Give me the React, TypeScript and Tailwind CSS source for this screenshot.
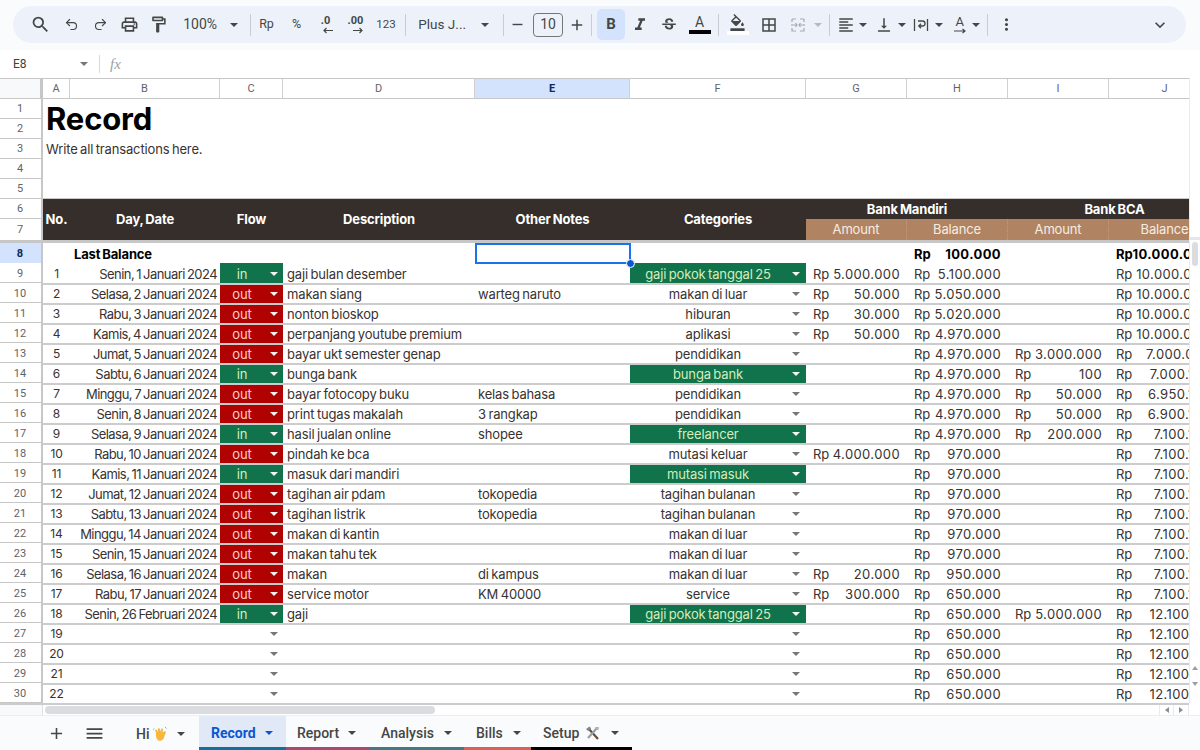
import React from "react";
import { Undo2, Redo2 } from "lucide-react";
import {
  MdSearch, MdOutlinePrint, MdOutlineFormatPaint, MdFormatItalic, MdStrikethroughS,
  MdFormatColorFill, MdOutlineBorderAll, MdVerticalAlignBottom, MdMoreVert, MdExpandMore, MdAdd, MdRemove, MdMenu, MdFormatAlignLeft,
} from "react-icons/md";

type Row = { d: string; f?: "in" | "out"; t?: string; n?: string; c?: string; g?: string; h: string; i?: string; j: string };

const rows: Row[] = [
  { d: "Senin, 1 Januari 2024", f: "in", t: "gaji bulan desember", c: "gaji pokok tanggal 25", g: "5.000.000", h: "5.100.000", j: "10.000.000" },
  { d: "Selasa, 2 Januari 2024", f: "out", t: "makan siang", n: "warteg naruto", c: "makan di luar", g: "50.000", h: "5.050.000", j: "10.000.000" },
  { d: "Rabu, 3 Januari 2024", f: "out", t: "nonton bioskop", c: "hiburan", g: "30.000", h: "5.020.000", j: "10.000.000" },
  { d: "Kamis, 4 Januari 2024", f: "out", t: "perpanjang youtube premium", c: "aplikasi", g: "50.000", h: "4.970.000", j: "10.000.000" },
  { d: "Jumat, 5 Januari 2024", f: "out", t: "bayar ukt semester genap", c: "pendidikan", h: "4.970.000", i: "3.000.000", j: "7.000.000" },
  { d: "Sabtu, 6 Januari 2024", f: "in", t: "bunga bank", c: "bunga bank", h: "4.970.000", i: "100", j: "7.000.100" },
  { d: "Minggu, 7 Januari 2024", f: "out", t: "bayar fotocopy buku", n: "kelas bahasa", c: "pendidikan", h: "4.970.000", i: "50.000", j: "6.950.100" },
  { d: "Senin, 8 Januari 2024", f: "out", t: "print tugas makalah", n: "3 rangkap", c: "pendidikan", h: "4.970.000", i: "50.000", j: "6.900.100" },
  { d: "Selasa, 9 Januari 2024", f: "in", t: "hasil jualan online", n: "shopee", c: "freelancer", h: "4.970.000", i: "200.000", j: "7.100.100" },
  { d: "Rabu, 10 Januari 2024", f: "out", t: "pindah ke bca", c: "mutasi keluar", g: "4.000.000", h: "970.000", j: "7.100.100" },
  { d: "Kamis, 11 Januari 2024", f: "in", t: "masuk dari mandiri", c: "mutasi masuk", h: "970.000", j: "7.100.100" },
  { d: "Jumat, 12 Januari 2024", f: "out", t: "tagihan air pdam", n: "tokopedia", c: "tagihan bulanan", h: "970.000", j: "7.100.100" },
  { d: "Sabtu, 13 Januari 2024", f: "out", t: "tagihan listrik", n: "tokopedia", c: "tagihan bulanan", h: "970.000", j: "7.100.100" },
  { d: "Minggu, 14 Januari 2024", f: "out", t: "makan di kantin", c: "makan di luar", h: "970.000", j: "7.100.100" },
  { d: "Senin, 15 Januari 2024", f: "out", t: "makan tahu tek", c: "makan di luar", h: "970.000", j: "7.100.100" },
  { d: "Selasa, 16 Januari 2024", f: "out", t: "makan", n: "di kampus", c: "makan di luar", g: "20.000", h: "950.000", j: "7.100.100" },
  { d: "Rabu, 17 Januari 2024", f: "out", t: "service motor", n: "KM 40000", c: "service", g: "300.000", h: "650.000", j: "7.100.100" },
  { d: "Senin, 26 Februari 2024", f: "in", t: "gaji", c: "gaji pokok tanggal 25", h: "650.000", i: "5.000.000", j: "12.100.100" },
  { d: "", h: "650.000", j: "12.100.100" },
  { d: "", h: "650.000", j: "12.100.100" },
  { d: "", h: "650.000", j: "12.100.100" },
  { d: "", h: "650.000", j: "12.100.100" },
];

const greenCats = ["gaji pokok tanggal 25", "bunga bank", "freelancer", "mutasi masuk"];
const COLS = "grid grid-cols-[27px_150px_63px_192px_155px_176px_101px_101px_101px_112px] w-[1178px]";
const SANS = "font-['Inter','Liberation_Sans',sans-serif] [word-spacing:-1px] tracking-[-0.15px]";
const UI = "font-['Roboto','Liberation_Sans',sans-serif] [word-spacing:0px] tracking-normal";

function Caret({ light }: { light?: boolean }) {
  return <span className={`w-0 h-0 border-x-[4px] border-t-[4px] border-x-transparent ${light ? "border-t-[#f3f3f3]" : "border-t-[#777777]"}`} />;
}
function TbCaret({ gray }: { gray?: boolean }) {
  return <span className={`block w-0 h-0 border-x-[4px] border-t-[4px] border-x-transparent ${gray ? "border-t-[#b5bac0]" : "border-t-[#444746]"}`} />;
}
function Slot({ className, children }: { className: string; children: React.ReactNode }) {
  return <div className={`flex items-center justify-center shrink-0 text-[#444746] ${className}`}>{children}</div>;
}
function Div() {
  return <div className="w-px h-[22px] bg-[#c7ccd4] shrink-0" />;
}
function Money({ v, bold, pad }: { v?: string; bold?: boolean; pad?: string }) {
  if (!v) return <div />;
  return (
    <div className={`flex justify-between items-center pl-[7px] whitespace-nowrap ${pad ?? "pr-[7px]"} ${bold ? "font-bold text-black" : ""}`}>
      <span>Rp</span>
      <span className="tracking-[0.4px]">{v}</span>
    </div>
  );
}
function jPad(v: string) {
  if (v.startsWith("10.")) return "pr-[12px]";
  if (v.startsWith("12.")) return "pr-[6px]";
  return "pr-[10px]";
}
function RowHead({ n, active, tall, noLine, shift }: { n: number; active?: boolean; tall?: boolean; noLine?: boolean; shift?: boolean }) {
  return (
    <div className={`w-[43px] shrink-0 flex items-center justify-center border-r-2 border-[#c7c7c7] text-[11px] pr-[1px] ${UI} ${tall ? "h-[21px]" : "h-5"} ${shift ? "pt-[2px]" : "pt-[1px]"} ${noLine ? "" : "border-b border-b-[#c7c7c7]"} ${active ? "bg-[#d3e3fd] text-[#0b2a5b] font-bold" : "bg-white text-[#5f6368]"}`}>
      {n}
    </div>
  );
}
function Hand() {
  return (
    <svg width="15" height="16" viewBox="0 0 15 16" className="ml-[3px]">
      <path d="M3 7 L2 4 L3.5 3.5 L5 6 L5 2.5 L6.6 2.2 L7.4 5.5 L8.4 2.4 L10 2.8 L9.6 6.5 L11.8 5 L13 6 L11.5 10 C11 14 8 15.5 5.5 14.5 C3.5 13.5 2.5 10 3 7Z" fill="#f6b73c" />
      <path d="M1 2.5 L0 4 M12 1 L13.5 2.5" stroke="#7fb2e6" strokeWidth="1" />
    </svg>
  );
}
function Tools() {
  return (
    <svg width="15" height="15" viewBox="0 0 15 15" className="ml-[6px]">
      <path d="M3 2 L13 13" stroke="#6b4a36" strokeWidth="2.2" />
      <path d="M12 2 L3 12" stroke="#9aa0a6" strokeWidth="2.2" />
      <path d="M1 3 L5 0.5 L6 3 L3 5Z" fill="#80868b" />
      <path d="M10 1 L14 1 L13.5 4 L11.5 4Z" fill="#b0b4b8" />
    </svg>
  );
}

export default function App() {
  return (
    <div className={`w-[1200px] h-[750px] overflow-hidden flex flex-col bg-white ${SANS}`}>
      {/* toolbar */}
      <div className="h-[50px] bg-[#f9fbfd] pt-[6px] pl-[13px] shrink-0">
        <div className={`w-[1173px] h-[37px] rounded-full bg-[#edf2fa] flex items-center pl-[11px] ${UI} text-[13px] text-[#444746]`}>
          <Slot className="w-[33px]"><MdSearch size={21} /></Slot>
          <Slot className="w-[29px]"><Undo2 size={15} strokeWidth={1.8} /></Slot>
          <Slot className="w-[29px]"><Redo2 size={15} strokeWidth={1.8} /></Slot>
          <Slot className="w-[29px]"><MdOutlinePrint size={19} /></Slot>
          <Slot className="w-[29px]"><MdOutlineFormatPaint size={19} /></Slot>
          <Slot className="w-[44px] text-[14px] justify-end">100%</Slot>
          <Slot className="w-[33px] justify-end pr-[12px]"><TbCaret /></Slot>
          <Div />
          <Slot className="w-[31px] text-[12.5px]">Rp</Slot>
          <Slot className="w-[29px] text-[12.5px]">%</Slot>
          <Slot className="w-[29px] flex-col leading-none">
            <span className="text-[11px] font-bold h-[11px] leading-[11px]">.0</span>
            <svg width="12" height="7" viewBox="0 0 12 7" className="mt-[1px] ml-[5px]"><path d="M11 3.5H2M4.5 1 2 3.5 4.5 6" fill="none" stroke="#444746" strokeWidth="1.2" /></svg>
          </Slot>
          <Slot className="w-[31px] flex-col leading-none">
            <span className="text-[11px] font-bold h-[11px] leading-[11px]">.00</span>
            <svg width="12" height="7" viewBox="0 0 12 7" className="mt-[1px] ml-[5px]"><path d="M1 3.5H10M7.5 1 10 3.5 7.5 6" fill="none" stroke="#444746" strokeWidth="1.2" /></svg>
          </Slot>
          <Slot className="w-[30px] text-[11.5px]">123</Slot>
          <div className="w-[4px] shrink-0" />
          <Div />
          <Slot className="w-[60px] text-[13.5px] justify-end">Plus J...</Slot>
          <Slot className="w-[37px]"><TbCaret /></Slot>
          <Div />
          <Slot className="w-[27px]"><MdRemove size={17} /></Slot>
          <Slot className="w-[30px] h-[24px] ml-[2px] border border-[#747775] rounded-[4px] text-[14px]">10</Slot>
          <Slot className="w-[28px]"><MdAdd size={18} /></Slot>
          <Div />
          <Slot className="w-[28px] h-[31px] ml-[5px] rounded-[5px] bg-[#d3e3fd] text-[15px] font-bold text-[#0b2a5b]">B</Slot>
          <Slot className="w-[29px]"><MdFormatItalic size={20} /></Slot>
          <Slot className="w-[30px]"><MdStrikethroughS size={18} /></Slot>
          <Slot className="w-[31px] flex-col">
            <span className="text-[14px] leading-[15px] h-[14px]">A</span>
            <span className="w-[22px] h-[4px] bg-black mt-[1px]" />
          </Slot>
          <div className="w-[3px] shrink-0" />
          <Div />
          <Slot className="w-[37px] flex-col">
            <MdFormatColorFill size={17} />
            <span className="w-[22px] h-[4px] bg-white" />
          </Slot>
          <Slot className="w-[26px]"><MdOutlineBorderAll size={18} /></Slot>
          <Slot className="w-[32px]">
            <svg width="14" height="14" viewBox="0 0 14 14" fill="none" stroke="#a5a9ae" strokeWidth="1.2">
              <path d="M1 1h4M1 1v3M1 6v2M1 10v3h4M13 1H9M13 1v3M13 6v2M13 10v3H9M2 7h4M4.5 5 6 7 4.5 9M12 7H8M9.5 5 8 7 9.5 9" />
            </svg>
          </Slot>
          <Slot className="w-[8px]"><TbCaret gray /></Slot>
          <div className="w-[7px] shrink-0" />
          <Div />
          <Slot className="w-[25px] justify-end"><MdFormatAlignLeft size={18} /></Slot>
          <Slot className="w-[12px] justify-end"><TbCaret /></Slot>
          <Slot className="w-[26px] justify-end"><MdVerticalAlignBottom size={18} /></Slot>
          <Slot className="w-[13px] justify-end"><TbCaret /></Slot>
          <Slot className="w-[23px] justify-end">
            <svg width="16" height="14" viewBox="0 0 16 14" fill="none" stroke="#444746" strokeWidth="1.3"><path d="M1.5 1v12M14.5 1v12M5 3h4.5a2 2 0 0 1 0 5H6M8 5.8 5.8 8 8 10.2" /></svg>
          </Slot>
          <Slot className="w-[14px] justify-end"><TbCaret /></Slot>
          <Slot className="w-[24px] flex-col items-end">
            <span className="text-[13px] leading-[13px] pr-[3px]">A</span>
            <svg width="14" height="6" viewBox="0 0 14 6"><path d="M1 3h11M9.5 1 12 3 9.5 5" fill="none" stroke="#444746" strokeWidth="1.2" /></svg>
          </Slot>
          <Slot className="w-[13px] justify-end"><TbCaret /></Slot>
          <div className="w-[7px] shrink-0" />
          <Div />
          <Slot className="w-[36px]"><MdMoreVert size={19} /></Slot>
          <div className="flex-1" />
          <Slot className="w-[24px] mr-[14px]"><MdExpandMore size={20} /></Slot>
        </div>
      </div>

      {/* formula bar */}
      <div className={`h-[28px] shrink-0 flex items-center bg-white text-[12px] text-[#3c4043] ${UI}`}>
        <span className="w-[80px] pl-[13px]">E8</span>
        <Caret />
        <span className="w-px h-[18px] bg-[#d5d8dc] ml-[11px]" />
        <span className="ml-[10px] text-[15px] italic text-[#9aa0a6] font-['Liberation_Serif',serif]">fx</span>
      </div>

      {/* sheet + scrollbar */}
      <div className="flex-1 min-h-0 flex">
        <div className="w-[1189px] shrink-0 flex flex-col overflow-hidden">
          {/* column header */}
          <div className={`h-[21px] shrink-0 flex border-y border-[#c7c7c7] text-[11px] text-[#5f6368] ${UI}`}>
            <div className="w-[43px] shrink-0 bg-[#f8f9fa] border-r-[3px] border-[#c7c7c7]" />
            <div className={`${COLS} text-center leading-[19px]`}>
              {["A", "B", "C", "D", "E", "F", "G", "H", "I", "J"].map((l) => (
                <div key={l} className={`border-r border-[#d0d0d0] ${l === "E" ? "bg-[#d3e3fd] text-[#0b2a5b] font-bold" : ""}`}>{l}</div>
              ))}
            </div>
          </div>

          {/* rows 1-5 */}
          <div className="flex h-[100px] shrink-0">
            <div className="flex flex-col">
              {[1, 2, 3, 4, 5].map((n) => <RowHead key={n} n={n} />)}
            </div>
            <div className="flex-1 border-b border-[#c7c7c7] pl-[3px]">
              <div className="text-[31px] font-bold text-black leading-[40px] h-[40px]">Record</div>
              <div className="text-[13px] text-[#383230] leading-[20px]">Write all transactions here.</div>
            </div>
          </div>

          {/* rows 6-7 */}
          <div className="flex h-[41px] shrink-0">
            <div className="flex flex-col">
              <RowHead n={6} />
              <RowHead n={7} tall noLine />
            </div>
            <div className={`${COLS} grid-rows-[20px_21px] bg-[#352e2b] text-white text-[13px] font-bold`}>
              <div className="row-span-2 flex items-center justify-center pt-[1px]">No.</div>
              <div className="row-span-2 flex items-center justify-center pt-[1px]">Day, Date</div>
              <div className="row-span-2 flex items-center justify-center pt-[1px]">Flow</div>
              <div className="row-span-2 flex items-center justify-center pt-[1px]">Description</div>
              <div className="row-span-2 flex items-center justify-center pt-[1px]">Other Notes</div>
              <div className="row-span-2 flex items-center justify-center pt-[1px]">Categories</div>
              <div className="col-span-2 flex items-center justify-center pt-[2px]">Bank Mandiri</div>
              <div className="col-span-2 flex items-center justify-center pt-[2px]">Bank BCA</div>
              {["Amount", "Balance", "Amount", "Balance"].map((l, i) => (
                <div key={i} className="bg-[#b08462] border-r border-dotted border-[#9aa5ad] font-normal text-[#f5ede4] flex items-center justify-center pt-[1px]">{l}</div>
              ))}
            </div>
          </div>
          <div className="h-[3px] shrink-0 bg-[#c7c7c7]" />

          {/* row 8 */}
          <div className="flex h-5 shrink-0 text-[13px] text-[#383230] leading-[20px]">
            <RowHead n={8} active noLine />
            <div className={COLS}>
              <div />
              <div className="pl-[4px] pt-[1px] font-bold text-black whitespace-nowrap">Last Balance</div>
              <div />
              <div />
              <div className="relative border-2 border-[#1a73e8] mr-[-1px]">
                <span className="absolute right-[-6px] bottom-[-6px] w-[9px] h-[9px] rounded-full bg-[#0b57d0] border border-white" />
              </div>
              <div />
              <div />
              <Money v="100.000" bold />
              <div />
              <Money v="10.000.000" bold pad="pr-[14px]" />
            </div>
          </div>

          {/* rows 9-30 */}
          {rows.map((r, i) => {
            const green = r.c && greenCats.includes(r.c);
            const first = i === 0;
            const fillTop = first ? "-mt-[2px] pt-[2px]" : "";
            return (
              <div key={i} className="flex h-5 shrink-0 text-[13px] text-[#383230] leading-[18px]">
                <RowHead n={i + 9} shift />
                <div className={`${COLS} ${first ? "pt-[2px]" : "border-t-2 border-[#cccccc]"}`}>
                  <div className="text-center text-[12px]">{i + 1}</div>
                  <div className="text-right pr-[3px] whitespace-nowrap tracking-[-0.55px]">{r.d}</div>
                  {r.f ? (
                    <div className={`flex items-center ${fillTop} ${r.f === "in" ? "bg-[#11734b] text-[#d4edbc]" : "bg-[#b10202] text-[#ffcfc9]"}`}>
                      <span className="flex-1 text-center">{r.f}</span>
                      <span className="w-[19px] flex justify-center"><Caret light /></span>
                    </div>
                  ) : (
                    <div className="flex items-center justify-end">
                      <span className="w-[19px] flex justify-center"><Caret /></span>
                    </div>
                  )}
                  <div className="pl-[4px] whitespace-nowrap">{r.t}</div>
                  <div className="pl-[3px] whitespace-nowrap">{r.n}</div>
                  <div className={`flex items-center ${green ? `bg-[#11734b] text-[#d4edbc] ${fillTop}` : ""}`}>
                    <span className="flex-1 text-center whitespace-nowrap">{r.c}</span>
                    <span className="w-[20px] flex justify-center"><Caret light={!!green} /></span>
                  </div>
                  <Money v={r.g} />
                  <Money v={r.h} />
                  <Money v={r.i} />
                  <Money v={r.j} pad={jPad(r.j)} />
                </div>
              </div>
            );
          })}

          {/* horizontal scrollbar */}
          <div className="h-[12px] shrink-0 flex border-t-2 border-[#cccccc]">
            <div className="w-[43px] shrink-0 bg-[#f8f9fa] border-r border-[#e0e0e0]" />
            <div className="flex-1 relative flex items-center">
              <div className="w-[390px] h-[8px] ml-[2px] rounded-full bg-[#dadce0]" />
              <div className="flex-1" />
              <div className="w-[15px] h-[10px] flex items-center justify-center border-x border-[#e8eaed]">
                <span className="w-0 h-0 border-y-[3px] border-r-[4px] border-y-transparent border-r-[#8a8d91]" />
              </div>
              <div className="w-[15px] h-[10px] flex items-center justify-center border-r border-[#e8eaed]">
                <span className="w-0 h-0 border-y-[3px] border-l-[4px] border-y-transparent border-l-[#8a8d91]" />
              </div>
            </div>
          </div>
        </div>

        {/* vertical scrollbar */}
        <div className="w-[11px] shrink-0 flex flex-col items-center border-l border-[#e8eaed] bg-white h-[625px]">
          <div className="h-[162px] w-full shrink-0 border-b-[3px] border-[#e4e6e9]" />
          <div className="w-[6px] h-[24px] rounded-full bg-[#dadce0] mt-[2px]" />
          <div className="flex-1" />
          <div className="w-0 h-0 border-x-[3px] border-b-[4px] border-x-transparent border-b-[#9aa0a6] mb-[12px]" />
          <div className="w-0 h-0 border-x-[3px] border-t-[4px] border-x-transparent border-t-[#9aa0a6] mb-[17px]" />
        </div>
      </div>

      {/* tabs */}
      <div className={`h-[35px] shrink-0 bg-[#f9fbfd] border-t border-[#eceef1] flex text-[14px] font-medium ${UI} tracking-[0.3px] text-[#444746]`}>
        <div className="w-[76px] flex items-center justify-end pr-[10px]"><MdAdd size={19} /></div>
        <div className="w-[36px] flex items-center justify-center"><MdMenu size={21} /></div>
        <div className="w-[87px] flex items-center pl-[24px] pt-[2px]">
          <span>Hi</span><Hand />
          <span className="ml-[9px]"><TbCaret /></span>
        </div>
        <div className="w-[87px] flex flex-col bg-[#e1e9f7]">
          <div className="flex-1 flex items-center pl-[12px] pt-[3px] text-[#0b57d0] font-bold">
            <span>Record</span>
            <span className="ml-[9px] w-0 h-0 border-x-[4px] border-t-[4px] border-x-transparent border-t-[#0b57d0]" />
          </div>
          <div className="h-[3px] bg-[#136e9a]" />
        </div>
        <div className="w-[83px] flex flex-col">
          <div className="flex-1 flex items-center pl-[11px] pt-[3px]"><span>Report</span><span className="ml-[9px]"><TbCaret /></span></div>
          <div className="h-[3px] bg-[#a84a70]" />
        </div>
        <div className="w-[95px] flex flex-col">
          <div className="flex-1 flex items-center pl-[12px] pt-[3px]"><span>Analysis</span><span className="ml-[10px]"><TbCaret /></span></div>
          <div className="h-[3px] bg-[#47777f]" />
        </div>
        <div className="w-[67px] flex flex-col">
          <div className="flex-1 flex items-center pl-[12px] pt-[3px]"><span>Bills</span><span className="ml-[10px]"><TbCaret /></span></div>
          <div className="h-[3px] bg-[#d6635a]" />
        </div>
        <div className="w-[101px] flex flex-col">
          <div className="flex-1 flex items-center pl-[12px] pt-[3px]"><span>Setup</span><Tools /><span className="ml-[11px]"><TbCaret /></span></div>
          <div className="h-[3px] bg-black" />
        </div>
      </div>
    </div>
  );
}
